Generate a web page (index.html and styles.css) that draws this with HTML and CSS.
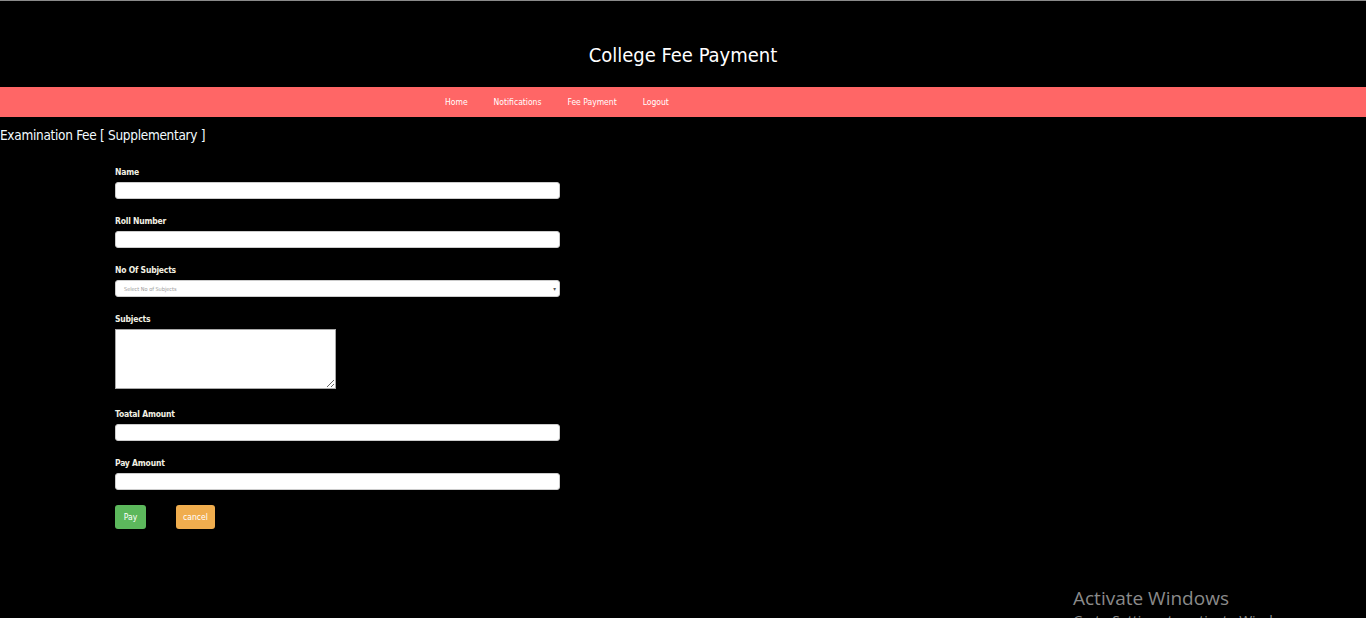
FILE: index.html
```html
<!DOCTYPE html>
<html>
<head>
<meta charset="utf-8">
<title>College Fee Payment</title>
<link rel="stylesheet" href="styles.css">
</head>
<body>
<header class="top">
  <h1 class="title">College Fee Payment</h1>
</header>
<nav class="nav">
  <a href="#">Home</a>
  <a href="#">Notifications</a>
  <a href="#">Fee Payment</a>
  <a href="#">Logout</a>
</nav>
<h2 class="page-title">Examination Fee [ Supplementary ]</h2>
<form class="form">
  <div class="group">
    <label>Name</label>
    <input type="text" class="field">
  </div>
  <div class="group">
    <label>Roll Number</label>
    <input type="text" class="field">
  </div>
  <div class="group">
    <label>No Of Subjects</label>
    <div class="select"><span>Select No of Subjects</span><span class="caret">▾</span></div>
  </div>
  <div class="group">
    <label>Subjects</label>
    <textarea class="area"></textarea>
  </div>
  <div class="group">
    <label>Toatal Amount</label>
    <input type="text" class="field">
  </div>
  <div class="group">
    <label>Pay Amount</label>
    <input type="text" class="field">
  </div>
  <div class="buttons">
    <button type="button" class="btn pay">Pay</button>
    <button type="button" class="btn cancel">cancel</button>
  </div>
</form>
<div class="watermark">
  <div class="wm1">Activate Windows</div>
  <div class="wm2">Go to Settings to activate Windows.</div>
</div>
</body>
</html>
```
FILE: styles.css
```css
html, body {
  margin: 0;
  padding: 0;
  background: #000;
  height: 618px;
  overflow: hidden;
}
body {
  font-family: "DejaVu Sans Condensed", "Roboto", sans-serif;
  color: #fff;
  border-top: 1px solid #8a8a8a;
  position: relative;
}
.top {
  height: 86px;
  display: flex;
  align-items: center;
  justify-content: center;
}
.title {
  margin: 21px 0 0 0;
  font-weight: normal;
  font-size: 20px;
  color: #fff;
}
.nav {
  background: #ff6666;
  height: 30px;
  display: flex;
  align-items: center;
  gap: 26px;
  padding-left: 445px;
}
.nav a {
  color: #fff;
  text-decoration: none;
  font-size: 8.5px;
}
.page-title {
  margin: 10px 0 0 0;
  font-weight: normal;
  font-size: 13.5px;
  letter-spacing: -0.3px;
  color: #f2fbff;
}
.form {
  margin: 21px 0 0 115px;
  width: 445px;
  display: flex;
  flex-direction: column;
  gap: 14px;
}
.group {
  display: flex;
  flex-direction: column;
}
.group label {
  font-size: 8.5px;
  letter-spacing: -0.2px;
  font-weight: bold;
  color: #f3f1e4;
  height: 15px;
  line-height: 15px;
  padding-top: 1px;
  margin-bottom: 2px;
}
.field {
  box-sizing: border-box;
  width: 445px;
  height: 17px;
  border: 1px solid #ccc;
  border-radius: 3px;
  background: #fff;
  margin: 0;
  padding: 0 6px;
}
.select {
  box-sizing: border-box;
  width: 445px;
  height: 17px;
  border: 1px solid #ccc;
  border-radius: 3px;
  background: #fff;
  display: flex;
  align-items: center;
  justify-content: space-between;
  padding: 0 3px 0 8px;
  font-size: 5.5px;
  color: #999;
}
.caret {
  color: #555;
  font-size: 6px;
}
.area {
  display: block;
  box-sizing: border-box;
  width: 221px;
  height: 60px;
  border: 1px solid #a9a9a9;
  background: #fff;
  margin: 0 0 3px 0;
  padding: 2px;
  resize: both;
}
.buttons {
  display: flex;
  gap: 30px;
  margin-top: 1px;
}
.btn {
  height: 24px;
  border: none;
  border-radius: 3px;
  color: #fff;
  font-family: "DejaVu Sans Condensed", "Roboto", sans-serif;
  font-size: 8.5px;
  padding: 0;
}
.pay {
  background: #5cb85c;
  width: 31px;
}
.cancel {
  background: #f0ad4e;
  width: 39px;
}
.watermark {
  position: absolute;
  left: 1073px;
  top: 584px;
  color: #8a8a8a;
  font-family: "Open Sans", "Noto Sans", sans-serif;
}
.wm1 {
  font-size: 19px;
  line-height: 26px;
}
.wm2 {
  font-size: 14px;
  line-height: 20px;
}
```
